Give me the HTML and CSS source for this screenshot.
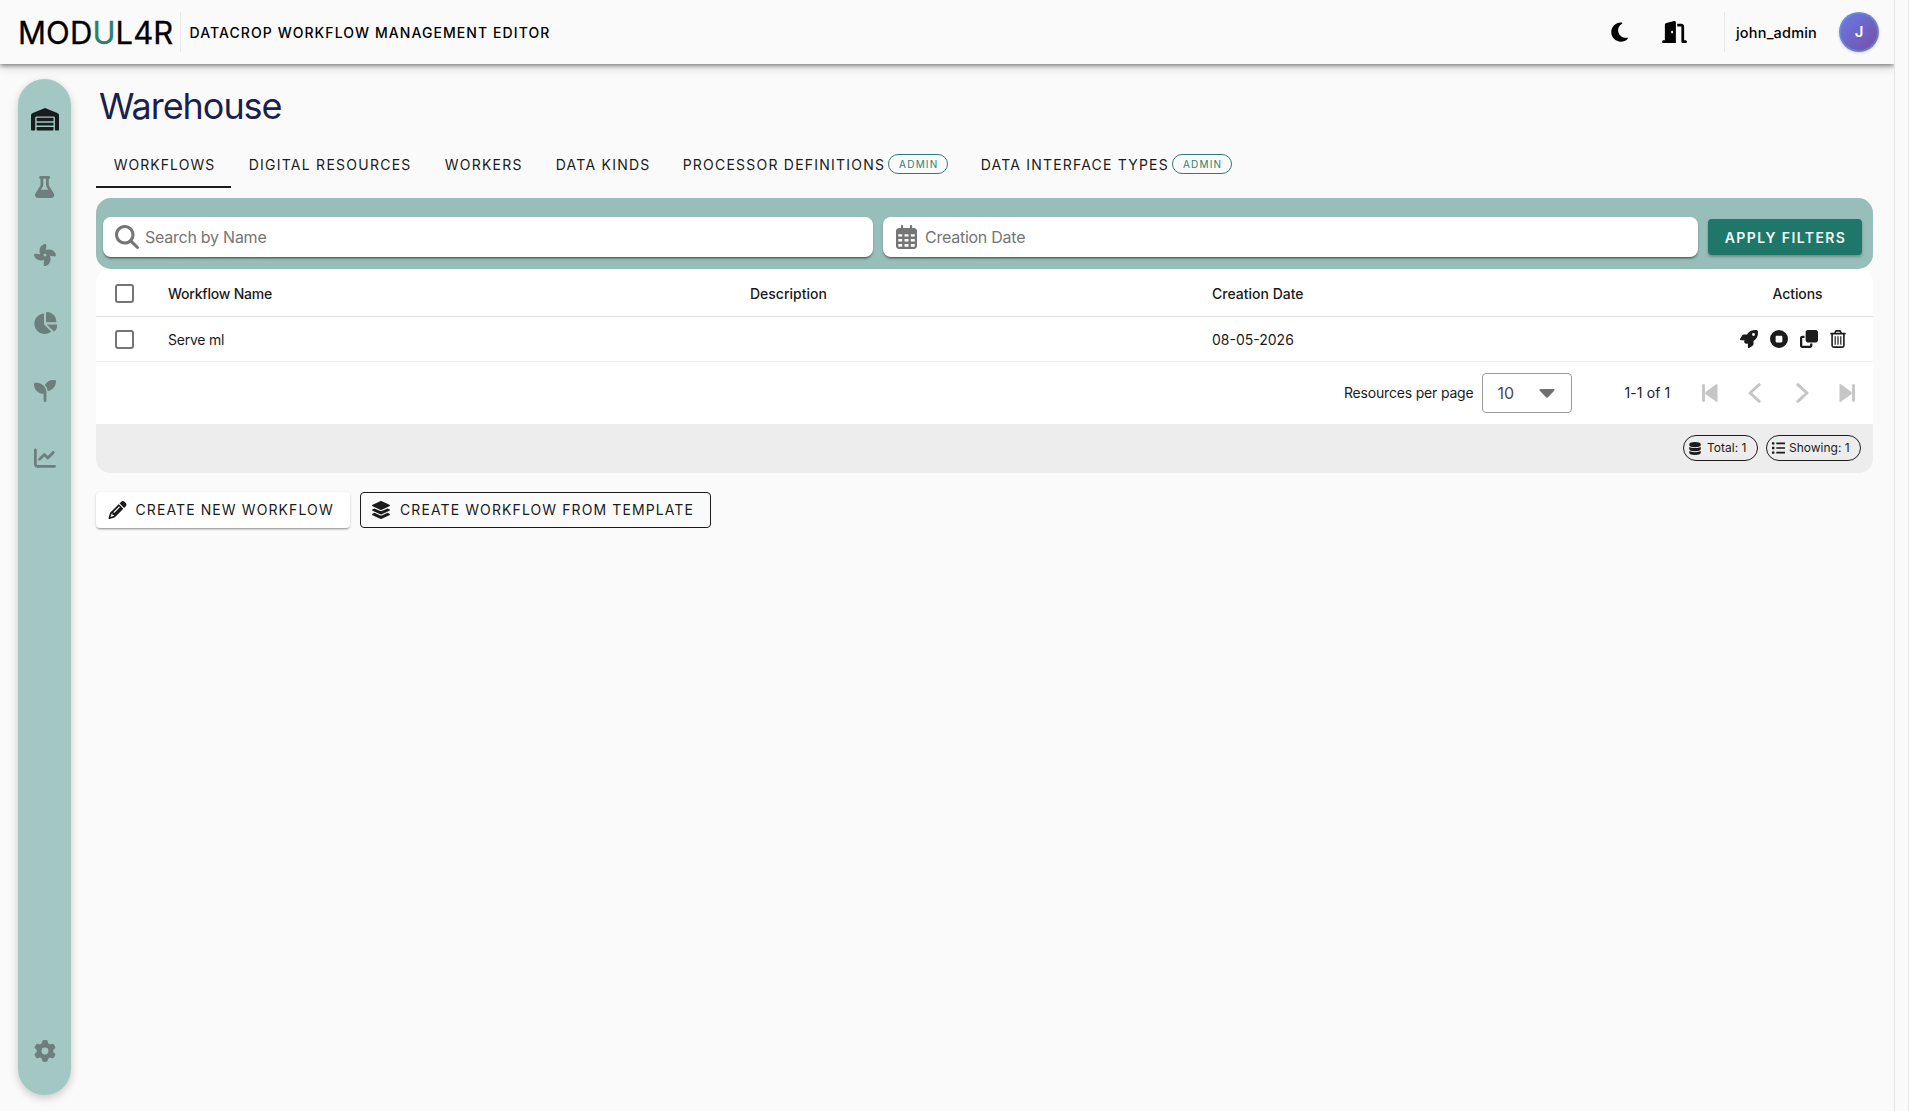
FILE: index.html
```html
<!DOCTYPE html>
<html lang="en">
<head>
<meta charset="utf-8">
<title>MODUL4R – Warehouse</title>
<link rel="stylesheet" href="styles.css">
</head>
<body>
<div class="app">
  <header class="topbar">
    <div class="logo">MOD<span class="logo-accent">U</span>L4R</div>
    <div class="topbar-divider"></div>
    <div class="app-name">DATACROP WORKFLOW MANAGEMENT EDITOR</div>
    <div class="topbar-actions">
      <svg class="icon-moon" viewBox="0 0 384 512"><path d="M223.5 32C100 32 0 132.3 0 256S100 480 223.5 480c60.6 0 115.5-24.2 155.8-63.4c5-4.9 6.3-12.5 3.1-18.7s-10.1-9.7-17-8.5c-9.8 1.7-19.8 2.6-30.1 2.6c-96.9 0-175.5-78.8-175.5-176c0-65.8 36-123.1 89.3-153.3c6.1-3.5 9.2-10.5 7.7-17.3s-7.3-11.9-14.3-12.5c-6.3-.5-12.6-.8-19-.8z"/></svg>
      <svg class="icon-door" viewBox="0 0 576 512"><path d="M320 32c0-9.9-4.5-19.2-12.3-25.2S289.8-1.4 280.2 1l-179.9 45C79 51.3 64 70.5 64 92.5V448H32c-17.7 0-32 14.3-32 32s14.3 32 32 32H96 288h32V480 32zM256 256c0 17.7-10.7 32-24 32s-24-14.3-24-32s10.7-32 24-32s24 14.3 24 32zm96-128h96V480c0 17.7 14.3 32 32 32h64c17.7 0 32-14.3 32-32s-14.3-32-32-32H512V128c0-35.3-28.7-64-64-64H352v64z"/></svg>
    </div>
    <div class="topbar-divider"></div>
    <div class="user-name">john_admin</div>
    <div class="avatar">J</div>
  </header>

  <div class="body">
    <nav class="sidebar">
      <svg class="nav-wide active" viewBox="0 0 640 512"><path d="M0 488V171.3c0-26.2 15.9-49.7 40.2-59.4L308.1 4.8c7.6-3.1 16.1-3.1 23.8 0L599.8 111.9c24.3 9.7 40.2 33.3 40.2 59.4V488c0 13.3-10.7 24-24 24H568c-13.3 0-24-10.7-24-24V224c0-17.7-14.3-32-32-32H128c-17.7 0-32 14.3-32 32V488c0 13.3-10.7 24-24 24H24c-13.3 0-24-10.7-24-24zm488 24l-336 0c-13.3 0-24-10.7-24-24V432H512l0 56c0 13.3-10.7 24-24 24zM128 400V336H512v64H128zm0-96V224H512l0 80H128z"/></svg>
      <svg viewBox="0 0 448 512"><path d="M288 0H160 128C110.3 0 96 14.3 96 32s14.3 32 32 32V196.8c0 11.8-3.3 23.5-9.5 33.5L10.3 406.2C3.6 417.2 0 429.7 0 442.6C0 480.9 31.1 512 69.4 512H378.6c38.3 0 69.4-31.1 69.4-69.4c0-12.8-3.6-25.4-10.3-36.4L329.5 230.4c-6.2-10.1-9.5-21.7-9.5-33.5V64c17.7 0 32-14.3 32-32s-14.3-32-32-32H288zM192 196.8V64h64V196.8c0 23.7 6.6 46.9 19 67.1L309.5 320h-171L173 263.9c12.4-20.2 19-43.4 19-67.1z"/></svg>
      <svg viewBox="0 0 512 512"><path d="M258.6 0c-1.7 0-3.4 .1-5.1 .5C168 17 115.6 102.3 130.5 189.3c2.9 17 8.4 32.9 15.9 47.4L32 224H29.4C13.2 224 0 237.2 0 253.4c0 1.7 .1 3.4 .5 5.1C17 344 102.3 396.4 189.3 381.5c17-2.9 32.9-8.4 47.4-15.9L224 480v2.6c0 16.2 13.2 29.4 29.4 29.4c1.7 0 3.4-.1 5.1-.5C344 495 396.4 409.7 381.5 322.7c-2.9-17-8.4-32.9-15.9-47.4L480 288h2.6c16.2 0 29.4-13.2 29.4-29.4c0-1.7-.1-3.4-.5-5.1C495 168 409.7 115.6 322.7 130.5c-17 2.9-32.9 8.4-47.4 15.9L288 32V29.4C288 13.2 274.8 0 258.6 0zM256 224a32 32 0 1 1 0 64 32 32 0 1 1 0-64z"/></svg>
      <svg viewBox="0 0 576 512"><path d="M304 240V16.6c0-9 7-16.6 16-16.6C443.7 0 544 100.3 544 224c0 9-7.6 16-16.6 16H304zM32 272C32 150.7 122.1 50.3 239 34.3c9.2-1.3 17 6.1 17 15.4V288L412.5 444.5c6.7 6.7 6.2 17.7-1.5 23.1C371.8 495.6 323.8 512 272 512C139.5 512 32 404.6 32 272zm526.4 16c9.3 0 16.6 7.8 15.4 17c-7.7 55.9-34.6 105.6-73.9 142.3c-6 5.6-15.4 5.2-21.2-.7L320 288H558.4z"/></svg>
      <svg viewBox="0 0 512 512"><path d="M512 32c0 113.6-84.6 207.5-194.2 222c-7.1-53.4-30.6-101.6-65.3-139.3C290.8 46.3 364 0 448 0h32c17.7 0 32 14.3 32 32zM0 96C0 78.3 14.3 64 32 64H64c123.7 0 224 100.3 224 224v32V480c0 17.7-14.3 32-32 32s-32-14.3-32-32V320C100.3 320 0 219.7 0 96z"/></svg>
      <svg viewBox="0 0 512 512"><path d="M64 64c0-17.7-14.3-32-32-32S0 46.3 0 64V400c0 44.2 35.8 80 80 80H480c17.7 0 32-14.3 32-32s-14.3-32-32-32H80c-8.8 0-16-7.2-16-16V64zm406.6 86.6c12.5-12.5 12.5-32.8 0-45.3s-32.8-12.5-45.3 0L320 210.7l-57.4-57.4c-12.5-12.5-32.8-12.5-45.3 0l-112 112c-12.5 12.5-12.5 32.8 0 45.3s32.8 12.5 45.3 0L240 221.3l57.4 57.4c12.5 12.5 32.8 12.5 45.3 0l128-128z"/></svg>
      <svg class="nav-bottom" viewBox="0 0 512 512"><path d="M495.9 166.6c3.2 8.7 .5 18.4-6.4 24.6l-43.3 39.4c1.1 8.3 1.7 16.8 1.7 25.4s-.6 17.1-1.7 25.4l43.3 39.4c6.9 6.2 9.6 15.9 6.4 24.6c-4.4 11.9-9.7 23.3-15.8 34.3l-4.7 8.1c-6.6 11-14 21.4-22.1 31.2c-5.9 7.2-15.7 9.6-24.5 6.8l-55.7-17.7c-13.4 10.3-28.2 18.9-44 25.4l-12.5 57.1c-2 9.1-9 16.3-18.2 17.8c-13.8 2.3-28 3.5-42.5 3.5s-28.7-1.2-42.5-3.5c-9.2-1.5-16.2-8.7-18.2-17.8l-12.5-57.1c-15.8-6.5-30.6-15.1-44-25.4L83.1 425.9c-8.8 2.8-18.6 .3-24.5-6.8c-8.1-9.8-15.5-20.2-22.1-31.2l-4.7-8.1c-6.1-11-11.4-22.4-15.8-34.3c-3.2-8.7-.5-18.4 6.4-24.6l43.3-39.4C64.6 273.1 64 264.6 64 256s.6-17.1 1.7-25.4L22.4 191.2c-6.9-6.2-9.6-15.9-6.4-24.6c4.4-11.9 9.7-23.3 15.8-34.3l4.7-8.1c6.6-11 14-21.4 22.1-31.2c5.9-7.2 15.7-9.6 24.5-6.8l55.7 17.7c13.4-10.3 28.2-18.9 44-25.4l12.5-57.1c2-9.1 9-16.3 18.2-17.8C227.3 1.2 241.5 0 256 0s28.7 1.2 42.5 3.5c9.2 1.5 16.2 8.7 18.2 17.8l12.5 57.1c15.8 6.5 30.6 15.1 44 25.4l55.7-17.7c8.8-2.8 18.6-.3 24.5 6.8c8.1 9.8 15.5 20.2 22.1 31.2l4.7 8.1c6.1 11 11.4 22.4 15.8 34.3zM256 336a80 80 0 1 0 0-160 80 80 0 1 0 0 160z"/></svg>
    </nav>

    <main class="content">
      <h1 class="title">Warehouse</h1>
      <div class="tabs">
        <div class="tab tab-active t-workflows">WORKFLOWS</div>
        <div class="tab">DIGITAL RESOURCES</div>
        <div class="tab t-workers">WORKERS</div>
        <div class="tab t-kinds">DATA KINDS</div>
        <div class="tab t-proc">PROCESSOR DEFINITIONS<span class="badge">ADMIN</span></div>
        <div class="tab t-types">DATA INTERFACE TYPES<span class="badge">ADMIN</span></div>
      </div>

      <section class="filters">
        <div class="field field-name">
          <svg class="icon-search" viewBox="0 0 512 512"><path d="M416 208c0 45.9-14.9 88.3-40 122.7L502.6 457.4c12.5 12.5 12.5 32.8 0 45.3s-32.8 12.5-45.3 0L330.7 376c-34.4 25.2-76.8 40-122.7 40C93.1 416 0 322.9 0 208S93.1 0 208 0S416 93.1 416 208zM208 352a144 144 0 1 0 0-288 144 144 0 1 0 0 288z"/></svg>
          <span class="placeholder">Search by Name</span>
        </div>
        <div class="field field-date">
          <svg class="icon-calendar" viewBox="0 0 448 512"><path fill-rule="evenodd" d="M128 0c13.3 0 24 10.7 24 24V64H296V24c0-13.3 10.7-24 24-24s24 10.7 24 24V64h40c35.3 0 64 28.7 64 64V448c0 35.3-28.7 64-64 64H64c-35.3 0-64-28.7-64-64V128C0 92.7 28.7 64 64 64h40V24c0-13.3 10.7-24 24-24zM48 196v50h84v-50zM182 196v50h84v-50zM316 196v50h84v-50zM48 296v58h84v-58zM182 296v58h84v-58zM316 296v58h84v-58zM48 404v46c0 8 6 14 14 14h70v-60zM182 404v60h84v-60zM316 404v60h70c8 0 14-6 14-14v-46z"/></svg>
          <span class="placeholder">Creation Date</span>
        </div>
        <button class="apply">APPLY FILTERS</button>
      </section>

      <section class="table-card">
        <div class="row row-head">
          <span class="checkbox"></span>
          <span class="c-name">Workflow Name</span>
          <span>Description</span>
          <span>Creation Date</span>
          <span class="c-actions-head">Actions</span>
        </div>
        <div class="row row-data">
          <span class="checkbox"></span>
          <span class="c-name">Serve ml</span>
          <span></span>
          <span class="c-date">08-05-2026</span>
          <span class="c-actions">
            <svg viewBox="0 0 512 512"><path d="M156.6 384.9L125.7 354c-8.5-8.5-11.5-20.8-7.7-32.2c3-8.9 7-20.5 11.8-33.8L24 288c-8.6 0-16.6-4.6-20.9-12.1s-4.2-16.7 .2-24.1l52.5-88.5c13-21.9 36.5-35.3 61.9-35.3l82.3 0c2.4-4 4.8-7.7 7.2-11.3C289.1-4.1 411.1-8.1 483.9 5.3c11.6 2.1 20.6 11.2 22.8 22.8c13.4 72.9 9.3 194.8-111.4 276.7c-3.5 2.4-7.3 4.8-11.3 7.2v82.3c0 25.4-13.4 49-35.3 61.9l-88.5 52.5c-7.4 4.4-16.6 4.5-24.1 .2s-12.1-12.2-12.1-20.9V380.8c-14.1 4.9-26.4 8.9-35.7 11.9c-11.2 3.6-23.4 .5-31.8-7.8zM384 168a40 40 0 1 0 0-80 40 40 0 1 0 0 80z"/></svg>
            <svg viewBox="0 0 512 512"><path fill-rule="evenodd" d="M256 512A256 256 0 1 0 256 0a256 256 0 1 0 0 512zM192 160H320c17.7 0 32 14.3 32 32V320c0 17.7-14.3 32-32 32H192c-17.7 0-32-14.3-32-32V192c0-17.7 14.3-32 32-32z"/></svg>
            <svg viewBox="0 0 512 512"><path d="M288 448H64V224h64V160H64c-35.3 0-64 28.7-64 64V448c0 35.3 28.7 64 64 64H288c35.3 0 64-28.7 64-64V384H288v64zm-64-96H448c35.3 0 64-28.7 64-64V64c0-35.3-28.7-64-64-64H224c-35.3 0-64 28.7-64 64V288c0 35.3 28.7 64 64 64z"/></svg>
            <svg class="icon-trash" viewBox="0 0 448 512"><g fill="none" stroke="#1b1b1b" stroke-width="46" stroke-linecap="round" stroke-linejoin="round"><path d="M24 104H424M128 100L160 34Q166 24 178 24H270Q282 24 288 34L320 100M56 110V440Q56 488 104 488H344Q392 488 392 440V110"/><path stroke-width="34" d="M144 190V406M224 190V406M304 190V406"/></g></svg>
          </span>
        </div>
        <div class="pager">
          <span class="pager-label">Resources per page</span>
          <div class="select"><span>10</span><svg viewBox="0 0 16 9"><path d="M1.5 0H14.5Q16 .4 15.2 1.8L9 8.3Q8 9.2 7 8.3L.8 1.8Q0 .4 1.5 0Z"/></svg></div>
          <span class="pager-range">1-1 of 1</span>
          <svg class="p-first" viewBox="0 0 16 18"><path d="M1.5 1.5V16.5" stroke-width="2.9"/><path class="solid" d="M15.500 1V17Q15.500 18.400 14.200 17.700L3.800 10.200Q2.600 9 3.800 7.800L14.200 .3Q15.500-.4 15.500 1Z"/></svg>
          <svg class="p-prev" viewBox="0 0 13 20"><path d="M11.2 1.7L2 10L11.2 18.3" stroke-width="3"/></svg>
          <svg class="p-next" viewBox="0 0 13 20"><path d="M1.8 1.7L11 10L1.8 18.3" stroke-width="3"/></svg>
          <svg class="p-last" viewBox="0 0 16 18"><path d="M14.5 1.5V16.5" stroke-width="2.9"/><path class="solid" d="M.5 1V17Q.5 18.400 1.800 17.700L12.200 10.200Q13.400 9 12.200 7.800L1.800 .3Q.5-.4 .5 1Z"/></svg>
        </div>
        <div class="summary">
          <span class="chip"><svg class="icon-db" viewBox="0 0 448 512"><path d="M448 80v48c0 44.2-100.3 80-224 80S0 172.2 0 128V80C0 35.8 100.3 0 224 0S448 35.8 448 80zM393.2 214.7c20.8-7.4 39.9-16.9 54.8-28.6V288c0 44.2-100.3 80-224 80S0 332.2 0 288V186.1c14.9 11.8 34 21.2 54.8 28.6C99.7 230.7 159.5 240 224 240s124.3-9.3 169.2-25.3zM0 346.1c14.9 11.8 34 21.2 54.8 28.6C99.7 390.7 159.5 400 224 400s124.3-9.3 169.2-25.3c20.8-7.4 39.9-16.9 54.8-28.6V432c0 44.2-100.3 80-224 80S0 476.2 0 432V346.1z"/></svg>Total: 1</span>
          <span class="chip chip-showing"><svg class="icon-list" viewBox="0 0 13 12"><path d="M0 .2h2.4v2.4H0zM0 4.8h2.4v2.4H0zM0 9.4h2.4v2.4H0zM4.3 .6H13v1.6H4.3zM4.3 5.2H13v1.6H4.3zM4.3 9.8H13v1.6H4.3z"/></svg>Showing: 1</span>
        </div>
      </section>

      <div class="buttons">
        <button class="btn btn-raised"><svg class="icon-pencil" viewBox="0 0 512 512"><path d="M410.3 231l11.3-11.3-33.9-33.9-62.1-62.1L291.7 89.8l-11.3 11.3-22.6 22.6L58.6 322.9c-10.4 10.4-18 23.3-22.2 37.4L1 480.7c-2.5 8.4-.2 17.5 6.1 23.7s15.3 8.5 23.7 6.1l120.3-35.4c14.1-4.2 27-11.8 37.4-22.2L387.7 253.7 410.3 231zM160 399.4l-9.1 22.7c-4 3.1-8.5 5.4-13.3 6.9L59.4 452l23-78.1c1.4-4.9 3.8-9.4 6.9-13.3l22.7-9.1v32c0 8.8 7.2 16 16 16h32zM362.7 18.7L348.3 33.2 325.7 55.8 314.3 67.1l33.9 33.9 62.1 62.1 33.9 33.9 11.3-11.3 22.6-22.6 14.5-14.5c25-25 25-65.5 0-90.5L453.3 18.7c-25-25-65.5-25-90.5 0zm-47.4 168l-144 144c-6.2 6.2-16.4 6.2-22.6 0s-6.2-16.4 0-22.6l144-144c6.2-6.2 16.4-6.2 22.6 0s6.2 16.4 0 22.6z"/></svg>CREATE NEW WORKFLOW</button>
        <button class="btn btn-outlined"><svg class="icon-layers" viewBox="0 0 576 512"><path d="M264.5 5.2c14.9-6.9 32.1-6.9 47 0l218.6 101c8.5 3.9 13.9 12.4 13.9 21.8s-5.4 17.9-13.9 21.8l-218.6 101c-14.9 6.9-32.1 6.9-47 0L45.9 149.8C37.4 145.8 32 137.3 32 128s5.4-17.9 13.9-21.8L264.5 5.2zM476.9 209.6l53.2 24.6c8.5 3.9 13.9 12.4 13.9 21.8s-5.4 17.9-13.9 21.8l-218.6 101c-14.9 6.9-32.1 6.9-47 0L45.9 277.8C37.4 273.8 32 265.3 32 256s5.4-17.9 13.9-21.8l53.2-24.6 152 70.2c23.4 10.8 50.4 10.8 73.8 0l152-70.2zm-152 198.2l152-70.2 53.2 24.6c8.5 3.9 13.9 12.4 13.9 21.8s-5.4 17.9-13.9 21.8l-218.6 101c-14.9 6.9-32.1 6.9-47 0L45.9 405.8C37.4 401.8 32 393.3 32 384s5.4-17.9 13.9-21.8l53.2-24.6 152 70.2c23.4 10.8 50.4 10.8 73.8 0z"/></svg>CREATE WORKFLOW FROM TEMPLATE</button>
      </div>
    </main>
  </div>
</div>
<div class="scroll-gutter"></div>
</body>
</html>
```
FILE: styles.css
```css
* { box-sizing: border-box; }

body {
  margin: 0;
  height: 1111px;
  display: flex;
  overflow: hidden;
  background: #fafafa;
  color: #1b1b1b;
  font: 400 14px/20px "Inter", sans-serif;
}

svg { display: block; flex: none; fill: currentColor; }
button { font: inherit; border: 0; color: inherit; }

.app { width: 1894px; display: flex; flex-direction: column; overflow: hidden; }
.scroll-gutter { width: 15px; border-left: 1px solid #e3e3e3; border-right: 1px solid #ebebeb; }

/* Top bar */
.topbar {
  height: 64px;
  flex: none;
  display: flex;
  align-items: center;
  color: #000;
  box-shadow: 0 2px 4px rgba(0, 0, 0, .4), 0 4px 10px rgba(0, 0, 0, .13);
}
.logo { width: 180px; padding: 2px 0 0 18px; font-size: 31px; line-height: 36px; letter-spacing: .1px; white-space: nowrap; -webkit-text-stroke: .3px currentColor; }
.logo-accent { color: #2a7f70; }
.topbar-divider { width: 1px; height: 40px; background: #e9e9e9; }
.app-name { margin-left: 8.5px; padding-top: 2px; font-weight: 500; letter-spacing: 1.08px; }
.topbar-actions { margin-left: auto; display: flex; align-items: center; gap: 34px; width: 113px; }
.icon-moon { width: 17px; height: 22px; }
.icon-door { width: 25px; height: 22px; }
.user-name { margin-left: 11px; width: 103px; padding-top: 2px; font-weight: 500; font-size: 14.5px; letter-spacing: .2px; }
.avatar {
  width: 40px; height: 40px; margin-right: 15px;
  border-radius: 50%;
  border: 2px solid rgba(110, 150, 215, .6);
  background: linear-gradient(135deg, #667eea, #764ba2) border-box;
  box-shadow: 0 1px 3px rgba(0, 0, 0, .15);
  color: #fff; font-size: 15px; font-weight: 600; text-align: center; line-height: 36px;
}

.body { flex: 1; display: flex; padding: 15px 21px 16px 18px; }

/* Side navigation */
.sidebar {
  width: 53px;
  flex: none;
  display: flex;
  flex-direction: column;
  align-items: center;
  gap: 45.8px;
  padding: 29px 0 33px 1px;
  border-radius: 27px;
  background: #a3c7c2;
  color: #6c7f7c;
  box-shadow: 0 3px 9px rgba(0, 0, 0, .2);
}
.sidebar svg { height: 22px; }
.sidebar .nav-wide { height: 22.5px; }
.sidebar .active { color: #171d1d; }
.sidebar .nav-bottom { margin-top: auto; }

/* Page */
.content { flex: 1; margin-left: 25px; }
.title { margin: 0; padding-left: 3px; height: 64px; color: #1b1f4f; font-size: 36px; line-height: 54px; font-weight: 400; letter-spacing: -1.05px; }

.tabs { display: flex; height: 45px; white-space: nowrap; }
.tab { padding: 0 16px 0 17.7px; width: 196px; line-height: 44px; letter-spacing: 1.25px; }
.tab-active { border-bottom: 2px solid #1b1b1b; }
.t-workflows { width: 135px; letter-spacing: 1.05px; }
.t-workers { width: 111px; }
.t-kinds { width: 127px; }
.t-proc { width: 298px; letter-spacing: 1.22px; }
.t-types { width: 290px; letter-spacing: 1.2px; }
.badge {
  display: inline-block;
  height: 20px;
  margin-left: 3px;
  padding: 0 8.5px 0 10px;
  border: 1px solid #2c7f72;
  border-radius: 10px;
  color: #2c8272;
  font-size: 10px;
  line-height: 18px;
  letter-spacing: 1.2px;
  vertical-align: 2px;
}

.filters {
  height: 71px;
  margin-top: 10px;
  padding: 19px 11px 0 7px;
  display: flex;
  gap: 10px;
  border-radius: 15px;
  background: #97beb8;
}
.field {
  display: flex;
  align-items: center;
  height: 40px;
  border-radius: 8px;
  background: #fff;
  color: #757575;
  font-size: 16px;
  box-shadow: 0 2px 2px -1px rgba(0, 0, 0, .5), 0 2px 3px rgba(0, 0, 0, .15);
}
.field-name { width: 770px; padding-left: 12px; gap: 6px; }
.field-date { width: 815px; padding-left: 13px; gap: 8px; }
.placeholder { letter-spacing: -.25px; }
.icon-search { width: 24px; height: 24px; }
.icon-calendar { width: 21px; height: 24px; }
.apply {
  width: 154px; height: 36px; margin-top: 2px; padding: 2px 0 0 1px;
  border-radius: 4px;
  background: #1f776a;
  color: #f2fbf9;
  font-weight: 600;
  letter-spacing: 1.4px;
  box-shadow: 0 2px 3px rgba(0, 0, 0, .25);
}

/* Table */
.table-card { border-radius: 14px; overflow: hidden; background: #fff; }
.row {
  display: grid;
  grid-template-columns: 72px 582px 462px 1fr auto;
  align-items: center;
  border-bottom: 1px solid #efefef;
}
.row-head { height: 48px; padding-top: 2px; border-bottom-color: #dedede; font-weight: 500; }
.row-data { height: 45px; }
.row-data .c-name, .c-date { padding-top: 1px; }
.c-name { letter-spacing: -.22px; }
.checkbox { width: 19px; height: 19px; margin-left: 18.5px; border: 2px solid #757575; border-radius: 3px; }
.c-actions-head { margin-right: 50.5px; letter-spacing: -.1px; }
.c-actions { display: flex; gap: 12px; margin-right: 27px; align-items: center; }
.c-actions svg { width: 18px; height: 18px; }
.c-actions .icon-trash { width: 16px; }

.pager { height: 62px; display: flex; align-items: center; padding: 0 18.5px 0 0; justify-content: flex-end; }
.pager-label { letter-spacing: -.18px; }
.select {
  width: 90px; height: 40px; margin-left: 8px; padding: 0 16px 0 15px;
  display: flex; align-items: center; justify-content: space-between;
  border: 1px solid #9b9b9b; border-radius: 4px; color: #4a4a4a; font-size: 16px;
}
.select svg { width: 16px; height: 9px; color: #707070; }
.pager-range { width: 77px; margin-left: 53px; letter-spacing: .1px; }
.pager > svg { color: #c6c6c6; fill: none; stroke: currentColor; stroke-linecap: round; stroke-linejoin: round; }
.pager .solid { fill: currentColor; stroke: none; }
.p-first, .p-last { width: 16px; height: 18px; }
.p-prev, .p-next { width: 13px; height: 20px; }
.p-prev { margin-left: 30px; }
.p-next { margin-left: 35px; }
.p-last { margin-left: 30px; }

.summary { height: 49px; padding: 11px 12px 0 0; display: flex; justify-content: flex-end; gap: 8px; background: #ededed; font-size: 12px; }
.chip { height: 26px; width: 75px; padding-left: 5px; display: flex; align-items: center; gap: 6px; border: 1px solid #1b1b1b; border-radius: 13px; white-space: nowrap; }
.chip-showing { width: 95px; gap: 4px; }
.icon-db { width: 12px; height: 13px; }
.icon-list { width: 13px; height: 12px; }

.buttons { display: flex; gap: 10px; margin-top: 19px; }
.btn { height: 36px; display: flex; align-items: center; border-radius: 4px; padding: 0 0 0 11.5px; white-space: nowrap; letter-spacing: 1.1px; }
.btn-raised { width: 254px; gap: 9px; background: #fff; box-shadow: 0 2px 2px -1px rgba(0, 0, 0, .35), 0 1px 3px rgba(0, 0, 0, .15); }
.btn-outlined { width: 351px; gap: 9px; padding-left: 10px; background: none; border: 1px solid #1b1b1b; }
.icon-pencil { width: 19px; height: 18px; }
.icon-layers { width: 20px; height: 18px; }
```
